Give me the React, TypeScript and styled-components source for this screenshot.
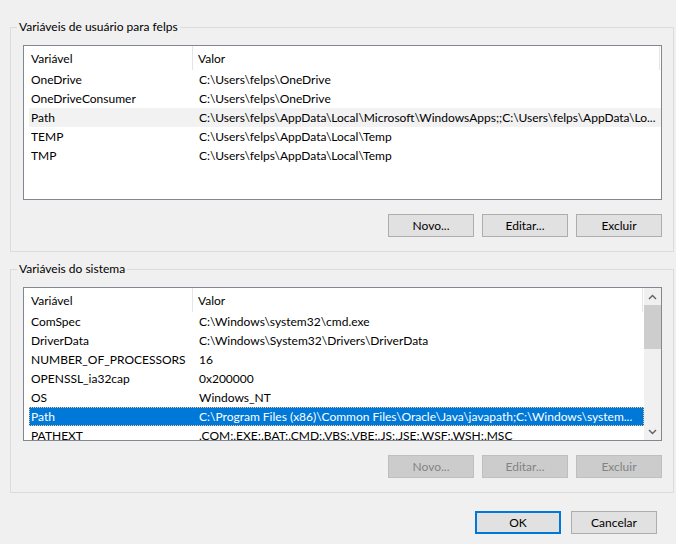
import React from "react";
import styled, { createGlobalStyle } from "styled-components";

interface VarRow {
  name: string;
  value: string;
}

const userVars: VarRow[] = [
  { name: "OneDrive", value: "C:\\Users\\felps\\OneDrive" },
  { name: "OneDriveConsumer", value: "C:\\Users\\felps\\OneDrive" },
  {
    name: "Path",
    value:
      "C:\\Users\\felps\\AppData\\Local\\Microsoft\\WindowsApps;;C:\\Users\\felps\\AppData\\Lo...",
  },
  { name: "TEMP", value: "C:\\Users\\felps\\AppData\\Local\\Temp" },
  { name: "TMP", value: "C:\\Users\\felps\\AppData\\Local\\Temp" },
];

const systemVars: VarRow[] = [
  { name: "ComSpec", value: "C:\\Windows\\system32\\cmd.exe" },
  { name: "DriverData", value: "C:\\Windows\\System32\\Drivers\\DriverData" },
  { name: "NUMBER_OF_PROCESSORS", value: "16" },
  { name: "OPENSSL_ia32cap", value: "0x200000" },
  { name: "OS", value: "Windows_NT" },
  {
    name: "Path",
    value:
      "C:\\Program Files (x86)\\Common Files\\Oracle\\Java\\javapath;C:\\Windows\\system...",
  },
  { name: "PATHEXT", value: ".COM;.EXE;.BAT;.CMD;.VBS;.VBE;.JS;.JSE;.WSF;.WSH;.MSC" },
];

const Chevron = ({ up }: { up?: boolean }) => (
  <svg width="9" height="6" viewBox="0 0 9 6">
    <path
      d={up ? "M1 5 L4.5 1.5 L8 5" : "M1 1 L4.5 4.5 L8 1"}
      fill="none"
      stroke="#606060"
      strokeWidth="1.4"
    />
  </svg>
);

const VarList = ({
  rows,
  selected,
  focused,
  height,
  scroll,
}: {
  rows: VarRow[];
  selected: number;
  focused?: boolean;
  height: number;
  scroll?: boolean;
}) => (
  <ListBox style={{ height }}>
    <ListBody>
      <HeaderRow>
        <NameHead>Variável</NameHead>
        <ValueHead>Valor</ValueHead>
      </HeaderRow>
      {rows.map((r, i) => (
        <Row
          key={r.name}
          $selected={i === selected}
          $focused={!!focused && i === selected}
        >
          <NameCell>{r.name}</NameCell>
          <ValueCell>{r.value}</ValueCell>
        </Row>
      ))}
    </ListBody>
    {scroll && (
      <ScrollBar>
        <ScrollArrow>
          <Chevron up />
        </ScrollArrow>
        <ScrollTrack>
          <Thumb />
        </ScrollTrack>
        <ScrollArrow>
          <Chevron />
        </ScrollArrow>
      </ScrollBar>
    )}
  </ListBox>
);

const App = () => {
  return (
    <>
      <GlobalStyle />
      <Dialog>
        <Group>
          <Legend>Variáveis de usuário para felps</Legend>
          <VarList rows={userVars} selected={2} height={155} />
          <ButtonRow>
            <Button>Novo...</Button>
            <Button>Editar...</Button>
            <Button>Excluir</Button>
          </ButtonRow>
        </Group>
        <Group>
          <Legend>Variáveis do sistema</Legend>
          <VarList rows={systemVars} selected={5} focused height={154} scroll />
          <ButtonRow>
            <Button disabled>Novo...</Button>
            <Button disabled>Editar...</Button>
            <Button disabled>Excluir</Button>
          </ButtonRow>
        </Group>
        <Footer>
          <Button $default>OK</Button>
          <Button>Cancelar</Button>
        </Footer>
      </Dialog>
    </>
  );
};

const GlobalStyle = createGlobalStyle`
  html, body {
    margin: 0;
    background: #f0f0f0;
  }
  body {
    font-family: Lato, "Noto Sans", sans-serif;
    font-size: 12px;
    color: #000;
  }
`;

const Dialog = styled.div`
  width: 676px;
  height: 544px;
  box-sizing: border-box;
  padding: 19px 2px 0 10px;
  display: flex;
  flex-direction: column;
  gap: 9px;
`;

const Group = styled.fieldset`
  margin: 0;
  padding: 10px 11px 14px 12px;
  border: 1px solid #dcdcdc;
  min-width: 0;
`;

const Legend = styled.legend`
  padding: 0 2px;
  margin-left: -6px;
  line-height: 16px;
  color: #000;
`;

const ListBox = styled.div`
  display: flex;
  box-sizing: border-box;
  background: #fff;
  border: 1px solid #828790;
  overflow: hidden;
`;

const ListBody = styled.div`
  flex: 1;
  min-width: 0;
  display: flex;
  flex-direction: column;
`;

const HeaderRow = styled.div`
  display: flex;
  flex-shrink: 0;
  height: 24px;
  align-items: stretch;
  border-right: 1px solid #e5e5e5;
  margin-right: 1px;
`;

const NameHead = styled.div`
  width: 169px;
  box-sizing: border-box;
  padding-left: 7px;
  display: flex;
  align-items: center;
  border-right: 1px solid #e5e5e5;
`;

const ValueHead = styled.div`
  flex: 1;
  padding-left: 5px;
  display: flex;
  align-items: center;
`;

const Row = styled.div<{ $selected: boolean; $focused: boolean }>`
  display: flex;
  flex-shrink: 0;
  height: 19px;
  align-items: center;
  margin-left: 5px;
  box-sizing: border-box;
  white-space: nowrap;
  background: ${(p) =>
    p.$focused ? "#0078d7" : p.$selected ? "#f2f2f2" : "transparent"};
  color: ${(p) => (p.$focused ? "#fff" : "#000")};
  border: 1px ${(p) => (p.$focused ? "dotted #f7c68a" : "solid transparent")};
`;

const NameCell = styled.div`
  width: 163px;
  box-sizing: border-box;
  padding-left: 1px;
  overflow: hidden;
`;

const ValueCell = styled.div`
  flex: 1;
  padding-left: 6px;
  overflow: hidden;
`;

const ScrollBar = styled.div`
  width: 17px;
  display: flex;
  flex-direction: column;
  background: #f0f0f0;
`;

const ScrollArrow = styled.div`
  height: 17px;
  display: flex;
  align-items: center;
  justify-content: center;
`;

const ScrollTrack = styled.div`
  flex: 1;
  display: flex;
  flex-direction: column;
`;

const Thumb = styled.div`
  height: 44px;
  background: #cdcdcd;
`;

const ButtonRow = styled.div`
  display: flex;
  justify-content: flex-end;
  gap: 8px;
  margin-top: 14px;
`;

const Button = styled.button<{ $default?: boolean }>`
  width: 86px;
  height: 23px;
  box-sizing: border-box;
  padding: 0;
  font: inherit;
  color: #000;
  background: #e1e1e1;
  border: ${(p) => (p.$default ? "2px solid #0078d7" : "1px solid #adadad")};
  border-radius: 0;

  &:disabled {
    background: #cccccc;
    border-color: #bfbfbf;
    color: #838383;
  }
`;

const Footer = styled.div`
  display: flex;
  justify-content: flex-end;
  gap: 10px;
  margin-top: 9px;
  padding-right: 17px;
`;

export default App;
